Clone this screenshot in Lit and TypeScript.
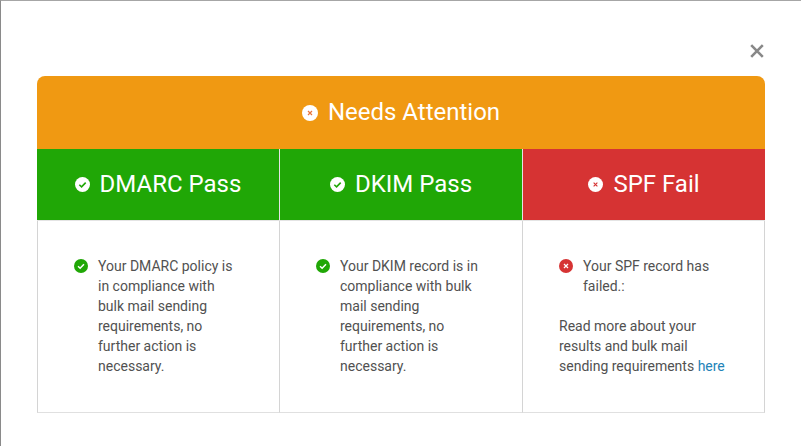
import { LitElement, css, html, unsafeCSS } from 'lit';
import { customElement } from 'lit/decorators.js';

const GREEN = '#20a706';
const RED = '#d63333';
const ORANGE = '#f09912';

const checkIcon = (bg: string, fg: string, cls: string) => html`
  <svg class=${cls} viewBox="0 0 16 16">
    <circle cx="8" cy="8" r="8" fill=${bg}></circle>
    <path d="M4.6 8.3 7 10.5 11.4 6" fill="none" stroke=${fg} stroke-width="1.7"></path>
  </svg>
`;

const crossIcon = (bg: string, fg: string, cls: string, s = 2.3, w = 1.4) => html`
  <svg class=${cls} viewBox="0 0 16 16">
    <circle cx="8" cy="8" r="8" fill=${bg}></circle>
    <path d="M${8 - s} ${8 - s} ${8 + s} ${8 + s}M${8 + s} ${8 - s} ${8 - s} ${8 + s}" fill="none" stroke=${fg} stroke-width=${w}></path>
  </svg>
`;

@customElement('app-root')
export class AppRoot extends LitElement {
  static styles = css`
    :host {
      display: block;
      height: 446px;
      box-sizing: border-box;
      border-top: 1px solid #a6a6a6;
      border-left: 1px solid #8a8a8a;
      background: #fff;
      font-family: Roboto, sans-serif;
      color: #515151;
    }

    .modal {
      display: flex;
      flex-direction: column;
      padding: 40px 36px 0 36px;
    }

    .close-row {
      display: flex;
      justify-content: flex-end;
      height: 35px;
    }

    .close {
      width: 14px;
      height: 14px;
      margin: 3px 1px 0 0;
    }

    .card {
      width: 728px;
    }

    .title {
      height: 73px;
      background: ${unsafeCSS(ORANGE)};
      border-radius: 8px 8px 0 0;
      display: flex;
      align-items: center;
      justify-content: center;
      gap: 10px;
      color: #fff;
      font-size: 24px;
    }

    .title span,
    .col-head span {
      padding-bottom: 2px;
    }

    .title-icon {
      width: 16px;
      height: 16px;
    }

    .columns {
      display: grid;
      grid-template-columns: 242px 243px 243px;
    }

    .col-head {
      height: 71px;
      border-bottom: 1px solid #e4e4e4;
      display: flex;
      align-items: center;
      justify-content: center;
      gap: 10px;
      color: #fff;
      font-size: 24px;
    }

    .col-head.pass {
      background: ${unsafeCSS(GREEN)};
    }

    .col-head.fail {
      background: ${unsafeCSS(RED)};
    }

    .col-head.divided {
      border-left: 1px solid #e4e4e4;
    }

    .head-icon {
      width: 15px;
      height: 15px;
    }

    .col-body {
      height: 192px;
      box-sizing: border-box;
      padding: 35px 36px 0 36px;
      border-left: 1px solid #d4d4d4;
      border-bottom: 1px solid #e0e0e0;
      font-size: 14px;
      line-height: 20px;
    }

    .col-body.last {
      border-right: 1px solid #d4d4d4;
    }

    .status {
      display: flex;
      gap: 10px;
    }

    .status-icon {
      flex: none;
      width: 14px;
      height: 14px;
      margin-top: 3px;
    }

    p {
      margin: 0;
    }

    .more {
      margin-top: 20px;
    }

    a {
      color: #2283b8;
      text-decoration: none;
    }
  `;

  render() {
    return html`
      <div class="modal">
        <div class="close-row">
          <svg class="close" viewBox="0 0 14 14">
            <path d="M1.2 1.2 12.8 12.8M12.8 1.2 1.2 12.8" fill="none" stroke="#888" stroke-width="2.6"></path>
          </svg>
        </div>
        <div class="card">
          <div class="title">
            ${crossIcon('#fff', '#e8743a', 'title-icon', 2, 1.2)}
            <span>Needs Attention</span>
          </div>
          <div class="columns">
            <div class="col-head pass">
              ${checkIcon('#fff', GREEN, 'head-icon')}
              <span>DMARC Pass</span>
            </div>
            <div class="col-head pass divided">
              ${checkIcon('#fff', GREEN, 'head-icon')}
              <span>DKIM Pass</span>
            </div>
            <div class="col-head fail divided">
              ${crossIcon('#fff', RED, 'head-icon', 2, 1.2)}
              <span>SPF Fail</span>
            </div>

            <div class="col-body">
              <div class="status">
                ${checkIcon(GREEN, '#fff', 'status-icon')}
                <p>Your DMARC policy is in compliance with bulk mail sending requirements, no further action is necessary.</p>
              </div>
            </div>
            <div class="col-body">
              <div class="status">
                ${checkIcon(GREEN, '#fff', 'status-icon')}
                <p>Your DKIM record is in compliance with bulk mail sending requirements, no further action is necessary.</p>
              </div>
            </div>
            <div class="col-body last">
              <div class="status">
                ${crossIcon(RED, '#fff', 'status-icon')}
                <p>Your SPF record has failed.:</p>
              </div>
              <p class="more">Read more about your results and bulk mail sending requirements <a href="#">here</a></p>
            </div>
          </div>
        </div>
      </div>
    `;
  }
}
